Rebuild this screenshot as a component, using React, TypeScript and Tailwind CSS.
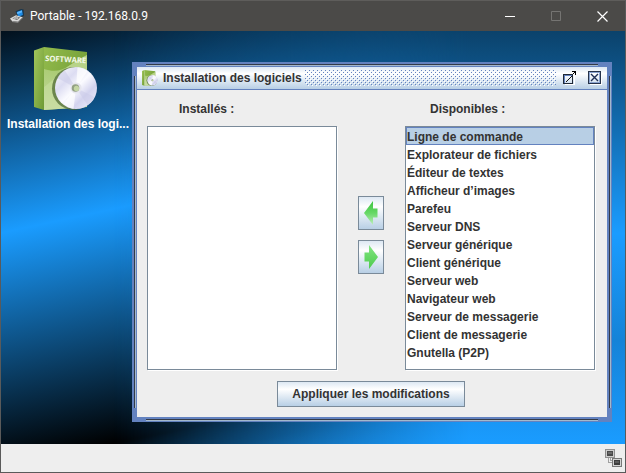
import { useState } from 'react'

const AVAILABLE = [
  'Ligne de commande',
  'Explorateur de fichiers',
  'Éditeur de textes',
  'Afficheur d’images',
  'Parefeu',
  'Serveur DNS',
  'Serveur générique',
  'Client générique',
  'Serveur web',
  'Navigateur web',
  'Serveur de messagerie',
  'Client de messagerie',
  'Gnutella (P2P)',
]

function LaptopIcon() {
  return (
    <svg className="h-4 w-4" viewBox="0 0 16 16" aria-hidden="true">
      <path d="M6.5 3.2 12 1l2.6.6.4 6.2-5.6 2.4z" fill="#17364f" />
      <path d="M7.6 4 13 2l.9 5-4.5 1.8z" fill="#1e8be6" />
      <path d="M8 4.2 12.8 2.4l.3 1.8-4.7 2z" fill="#5db8ff" />
      <path d="m1 10.6 6-3.4 6.8 2-5 4.6L3 13z" fill="#d9d9d9" />
      <path d="m3.4 10.4 3.8-2 4 1.2-3.2 2.4z" fill="#6d6d6d" />
      <path d="m4.6 10.7 4.6-1.3M5.6 9.4l3.6 1.4" stroke="#e8e8e8" strokeWidth=".6" />
      <path d="m3 13 5.8.8 5-4.6v.9l-4.8 4.6L3 13.9z" fill="#8f8f8f" />
    </svg>
  )
}

function SoftwareIcon({ id, className, title }: { id: string; className: string; title?: string }) {
  return (
    <svg className={className} viewBox="0 0 64 64" aria-hidden="true">
      <defs>
        <linearGradient id={`${id}-side`} x1="0" y1="0" x2="1" y2="1">
          <stop offset="0" stopColor="#a3c65c" />
          <stop offset="1" stopColor="#6d9a34" />
        </linearGradient>
        <linearGradient id={`${id}-front`} x1="0" y1="0" x2="1" y2=".6">
          <stop offset="0" stopColor="#93bb4c" />
          <stop offset="1" stopColor="#709c36" />
        </linearGradient>
        <linearGradient id={`${id}-glow`} x1="0" y1="0" x2="0" y2="1">
          <stop offset="0" stopColor="#a9cc70" />
          <stop offset="1" stopColor="#dbe9bd" />
        </linearGradient>
        <linearGradient id={`${id}-disc`} x1="0" y1="0" x2="1" y2="1">
          <stop offset="0" stopColor="#ffffff" />
          <stop offset=".3" stopColor="#dcdcf2" />
          <stop offset=".5" stopColor="#fbfbff" />
          <stop offset=".7" stopColor="#d3d3ee" />
          <stop offset="1" stopColor="#f6f6ff" />
        </linearGradient>
      </defs>
      <path d="M0 3.500 10 0v63L0 60z" fill={`url(#${id}-side)`} />
      <path d="m10 0 43 5v55l-43 3z" fill={`url(#${id}-front)`} />
      <path d="M10 22c18 6 24-4 43-14v52l-43 3z" fill={`url(#${id}-glow)`} opacity=".75" />
      <path d="M10 40C22 32 28 20 53 8v52l-43 3z" fill="#cfe2a8" opacity=".45" />
      {title && (
        <text
          x="11"
          y="14"
          fill="#f4f9e8"
          fontSize="7.700"
          fontWeight="700"
          fontFamily="'Open Sans', sans-serif"
          transform="rotate(3 11 14)"
        >
          {title}
        </text>
      )}
      <circle cx="39.500" cy="41.500" r="21.500" fill="#55703a" opacity=".8" />
      <circle cx="42" cy="41" r="21" fill={`url(#${id}-disc)`} />
      <path d="M42 41 23.500 31a21 21 0 0 1 7-8zM42 41l18.500 9a21 21 0 0 1-7 8z" fill="#c9c9e8" opacity=".5" />
      <path d="M42 41 43.500 20a21 21 0 0 1 10 4zM42 41 39.500 62a21 21 0 0 1-10-5z" fill="#fff" opacity=".7" />
      <circle cx="42" cy="41" r="5.600" fill="#e6e6ee" />
      <circle cx="41.500" cy="41" r="3.800" fill="#93a184" />
      <circle cx="42.500" cy="41.400" r="2.600" fill="#c4d6a4" />
    </svg>
  )
}

function ArrowIcon({ direction }: { direction: 'left' | 'right' }) {
  const id = `arrow-${direction}`
  return (
    <svg className="h-6 w-[14px]" viewBox="0 0 14 24" aria-hidden="true">
      <defs>
        <linearGradient id={id} x1="0" y1="0" x2="0" y2="1">
          <stop offset="0" stopColor={direction === 'left' ? '#3cc440' : '#86e486'} />
          <stop offset=".5" stopColor="#66d866" />
          <stop offset="1" stopColor={direction === 'left' ? '#bdeebd' : '#4fcb4f'} />
        </linearGradient>
      </defs>
      <path
        d={direction === 'left' ? 'M0 12 9 0v7.5h4.5v9H9V24z' : 'M14 12 5 0v7.5H.5v9H5V24z'}
        fill={`url(#${id})`}
      />
    </svg>
  )
}

function NetworkIcon() {
  return (
    <svg className="h-[18px] w-[18px]" viewBox="0 0 18 18" shapeRendering="crispEdges" aria-hidden="true">
      <path d="M4.5 9v4.500H8M6.500 9v2.500H9" fill="none" stroke="#a0a0a0" />
      <path d="M1 0h10v9H1z" fill="#909090" />
      <path d="M2 1h8v7H2z" fill="#cecece" />
      <path d="M3 2h6v5H3z" fill="#4a4a4a" />
      <path d="M4 3h4v2H4z" fill="#6a6a6a" />
      <path d="M8 9h10v9H8z" fill="#787878" />
      <path d="M9 10h8v7H9z" fill="#d4d4d4" />
      <path d="M10 11h6v5h-6z" fill="#3c3c3c" />
      <path d="M11 12h4v2h-4z" fill="#5c5c5c" />
    </svg>
  )
}

function TitleBar() {
  const button = 'flex h-[30px] w-[46px] items-center justify-center'
  return (
    <header className="flex h-[31px] items-center border-t border-[#5e5d5b] bg-[#4b4a48] text-white">
      <div className="flex flex-1 items-center gap-[5px] pl-2">
        <LaptopIcon />
        <h1 className="font-[Roboto,'Noto_Sans',sans-serif] text-[12px] leading-4">Portable - 192.168.0.9</h1>
      </div>
      <button type="button" aria-label="Réduire" className={button}>
        <svg className="h-[11px] w-[11px]" viewBox="0 0 11 11" stroke="#fff">
          <path d="M0 5.500h10" />
        </svg>
      </button>
      <button type="button" aria-label="Agrandir" disabled className={button}>
        <svg className="h-[11px] w-[11px]" viewBox="0 0 11 11" fill="none" stroke="#757472">
          <path d="M.5.500h9v9h-9z" />
        </svg>
      </button>
      <button type="button" aria-label="Fermer" className={button}>
        <svg className="h-[11px] w-[11px]" viewBox="0 0 11 11" stroke="#fff" strokeWidth="1.200">
          <path d="m.5.500 10 10M10.500.500l-10 10" />
        </svg>
      </button>
    </header>
  )
}

// Etched lines that run along the four sides of the frame, short of the corners.
function FrameLines() {
  return (
    <>
      <span className="absolute top-0.5 right-[14px] left-[14px] h-0.5 border-t border-[#333a48] bg-[#a3b8cc]" />
      <span className="absolute right-[14px] bottom-px left-[14px] h-0.5 border-t border-[#333a48] bg-[#a3b8cc]" />
      <span className="absolute top-[14px] bottom-[14px] left-0.5 w-0.5 border-l border-[#333a48] bg-[#a3b8cc]" />
      <span className="absolute top-[14px] right-px bottom-[14px] w-0.5 border-l border-[#333a48] bg-[#a3b8cc]" />
    </>
  )
}

function SoftwareList({ id, label, labelClass, items }: { id: string; label: string; labelClass: string; items: string[] }) {
  const [selected, setSelected] = useState(items[0] ?? '')
  return (
    <div className="flex min-w-0 flex-1 flex-col">
      <label htmlFor={id} className={`h-9 pt-[11px] ${labelClass}`}>
        {label}
      </label>
      <select
        id={id}
        size={13}
        value={selected}
        onChange={(e) => setSelected(e.target.value)}
        className="h-[244px] w-full appearance-none overflow-hidden rounded-none border border-[#7a8a99] bg-white p-0 shadow-[1px_1px_0_#fff] outline-none"
      >
        {items.map((item) => (
          <option
            key={item}
            value={item}
            className="h-[18px] min-h-0 border border-transparent px-0 pt-0.5 pb-0 text-[12px] leading-4 font-bold text-[#333] checked:border-[#6382bf] checked:bg-linear-to-r checked:from-[#b8cfe5] checked:to-[#b8cfe5]"
          >
            {item}
          </option>
        ))}
      </select>
    </div>
  )
}

function InstallerWindow() {
  const metal = 'border border-[#7a8a99] bg-linear-to-b from-[#dde8f3] via-white via-30% to-[#b8cfe5]'
  return (
    <section className="absolute top-[31px] right-[13px] left-[131px] border-[5px] border-[#6382bf] text-[12px] leading-4 font-bold text-[#333]">
      <div className="absolute -inset-[5px]">
        <FrameLines />
      </div>
      <div className="relative flex h-[23px] items-center border-b border-[#6382bf] bg-linear-to-b from-[#dde8f3] via-white via-30% to-[#b8cfe5] px-[5px]">
        <SoftwareIcon id="small" className="h-4 w-4" />
        <h2 className="w-[147px] pl-[5px] whitespace-nowrap">Installation des logiciels</h2>
        <svg className="h-4 flex-1" aria-hidden="true" shapeRendering="crispEdges">
          <defs>
            <pattern id="bumps" width="4" height="4" patternUnits="userSpaceOnUse">
              <path d="M0 0h1v1H0zM2 2h1v1H2z" fill="#6382bf" />
              <path d="M1 1h1v1H1zM3 3h1v1H3z" fill="#fff" />
            </pattern>
          </defs>
          <rect width="100%" height="100%" fill="url(#bumps)" />
        </svg>
        <button type="button" aria-label="Agrandir la fenêtre" className="ml-[7px]">
          <svg className="h-[14px] w-[14px]" viewBox="0 0 14 14" fill="none" shapeRendering="crispEdges">
            <path d="M1.500 13.500h10V5" stroke="#fff" />
            <path d="M.5 3.500h9v9h-9z" stroke="#1f2937" />
            <path d="M1.500 11.500v-7h7" stroke="#6382bf" />
            <path d="M3 10h1V9h1V8h1V7h1V6h1V5h1v1H8v1H7v1H6v1H5v1H4v1H3z" fill="#111" />
            <path d="M9 0h4v4h-1V2h-1v1h-1V2h1V1H9z" fill="#000" />
          </svg>
        </button>
        <button type="button" aria-label="Fermer la fenêtre" className="ml-[11px]">
          <svg className="h-[14px] w-[14px]" viewBox="0 0 14 14" fill="none" shapeRendering="crispEdges">
            <path d="M1.500 13.500h12v-12" stroke="#fff" />
            <path d="M.5.500h12v12H.5z" stroke="#26334a" />
            <path d="M1.500 11.500v-10h10v10z" stroke="#8ba4d0" />
            <path d="m3 3 7 7M10 3l-7 7" stroke="#1f2f55" strokeWidth="1.400" shapeRendering="auto" />
          </svg>
        </button>
      </div>

      <form className="relative bg-[#eee] pr-3 pb-[10px] pl-[10px]" onSubmit={(e) => e.preventDefault()}>
        <div className="flex gap-[21px]">
          <SoftwareList id="installed" label="Installés :" labelClass="pl-8" items={[]} />
          <div className="flex flex-col gap-[10px] pt-[106px]">
            <button type="button" aria-label="Installer" className={`flex h-[34px] w-[26px] items-center justify-center ${metal}`}>
              <ArrowIcon direction="left" />
            </button>
            <button type="button" aria-label="Désinstaller" className={`flex h-[34px] w-[26px] items-center justify-center ${metal}`}>
              <ArrowIcon direction="right" />
            </button>
          </div>
          <SoftwareList id="available" label="Disponibles :" labelClass="pl-[25px]" items={AVAILABLE} />
        </div>
        <div className="flex justify-center pt-[11px]">
          <button type="submit" className={`h-[26px] px-[14px] ${metal}`}>
            Appliquer les modifications
          </button>
        </div>
      </form>
    </section>
  )
}

export default function App() {
  return (
    <div className="flex min-h-screen flex-col border-x border-b border-[#5a5a5a] bg-[#eee] font-['Liberation_Sans',Arial,sans-serif]">
      <TitleBar />
      <main className="relative min-h-[413px] flex-1 bg-[linear-gradient(168deg,#02101c_0%,#1a9cff_37%,#000_80%,#031a2c_85%,#1a9cff_100%)]">
        <div className="absolute inset-0 bg-[linear-gradient(180deg,#0b426b_0%,#1a9cff_49%,#1583d8_75%,#1a9cff_100%)] [mask-image:linear-gradient(90deg,transparent_18%,#000_75%)]" />
        <button type="button" className="relative flex flex-col items-start gap-[5px] pt-4 pl-[6px] text-[12px] leading-4 font-bold text-white">
          <SoftwareIcon id="large" className="ml-[27px] h-16 w-16" title="SOFTWARE" />
          <span>Installation des logi...</span>
        </button>
        <InstallerWindow />
      </main>
      <footer className="flex h-7 items-center justify-end pr-[3px]">
        <NetworkIcon />
      </footer>
    </div>
  )
}
